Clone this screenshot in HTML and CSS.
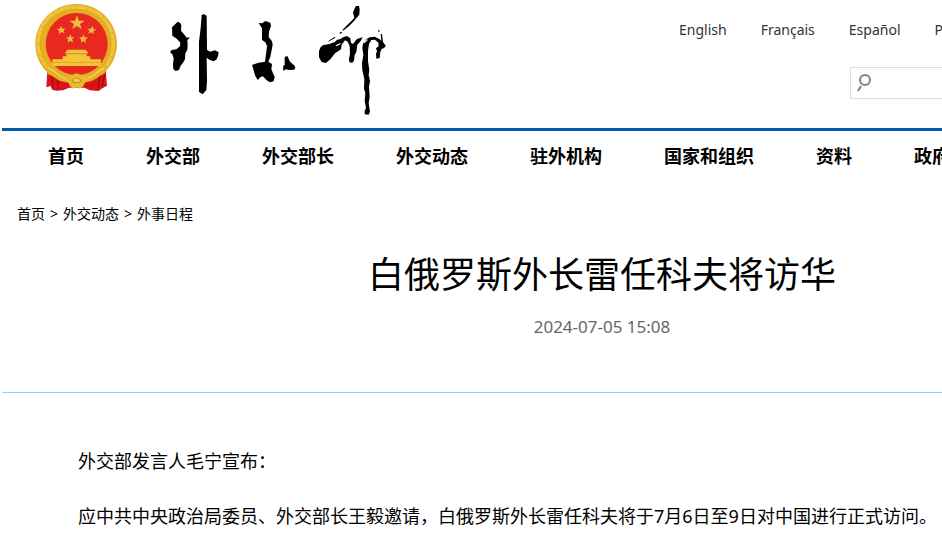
FILE: index.html
```html
<!DOCTYPE html>
<html lang="zh-CN">
    <head>
        <meta charset="UTF-8">
        <title>白俄罗斯外长雷任科夫将访华</title>
        <link rel="stylesheet" href="styles.css">
    </head>
    <body>
        <div class="page">
            <header class="header">
                <a class="logo" href="#" aria-label="外交部">
                    <svg class="emblem" viewBox="0 0 312 300" aria-hidden="true">
                        <path fill="#d9141a" d="M65 198 61 262 74 258 78 269 91 272 111 271 128 263 177 263 191 271 218 273 229 265 243 257 238 197Z"/>
                        <path fill="#a90f12" d="M73 215l5 48 5 1-4-46zM91 228l3 40 5 1-2-38zM219 225l-5 44 5-2 6-44zM234 213l-7 45 5-2 7-40z"/>
                        <path fill="#e3ae22" d="M151 12C84 12 28 65 28 132c0 31 11 57 28 77 28 27 61 33 94 32 37 1 69-10 95-34 18-21 28-48 28-76C273 65 218 12 151 12Z"/>
                        <path fill="none" stroke="#efc440" stroke-width="10" stroke-dasharray="31 3 17 2" d="M70 207C15 155 31 68 89 37c62-33 134-11 161 43 22 45 13 94-19 129"/>
                        <path fill="none" stroke="#d9a11c" stroke-width="2" stroke-dasharray="9 7 4 5" d="M63 198C28 145 39 78 90 46c55-34 124-14 151 34 20 39 13 83-9 115"/>
                        <circle cx="152" cy="132" r="93" fill="#e92820"/>
                        <path fill="#f2c53a" d="M79 178h146v20H79zM110 169h83v10h-83zM121 161h61v9h-61zM116 160l7-9h57l8 9zM124 149h56v3h-56z"/>
                        <path fill="#dc9e23" d="M119 160h66v3h-66zM79 187h146v2H79z"/>
                        <path fill="#e3b02a" d="M64 190c24 8 31 33 60 40l53-1c30-7 40-29 62-39l-2 30c-18 7-25 19-43 24-31 7-57 8-90-1-16-5-24-17-39-20Z"/>
                        <path fill="none" stroke="#f6d35a" stroke-width="4" d="M66 204c22 7 32 28 54 32M236 204c-21 7-31 26-54 32"/>
                        <path fill="#d9141a" d="M106 246c14 5 24 4 34 4l-14 14-17 6-14-12ZM198 246c-14 5-24 4-34 4l14 14 17 6 14-12Z"/>
                        <path fill="#e9b930" d="m152 220 14 5 16 5 10 12-14 4-6 12-10 8-10-4-10 4-10-8-6-12-14-4 10-12 16-5Z"/>
                        <path fill="#c98c16" d="m136 240 16-8 16 8-6 9h-20Z"/>
                        <path fill="#f4cc43" d="m140 240 12-5 12 5-5 6h-14Z"/>
                        <g fill="#eebd3d">
                            <path d="m153 46 6 16h17l-14 10 5 15-14-9-14 9 5-15-14-10h17Z"/>
                            <path d="m105 77 4 9 10-1-7 7 4 8-9-4-8 6 1-10-8-5 10-1Z"/>
                            <path d="m201 77 1 10 9 2-9 5 1 9-7-6-10 4 5-8-7-7h10Z"/>
                            <path d="m133 103 3 9h10l-8 6 4 9-9-5-8 6 2-10-8-5 10-1Z"/>
                            <path d="m173 103 3 9 10 1-8 6 2 9-8-5-8 5 2-9-7-7h10Z"/>
                        </g>
                    </svg>
                    <!-- brush lettering -->
                    <svg class="lettering" viewBox="0 0 720 360" aria-hidden="true">
                        <path d="M53 65 61 69 64 76 63 92 77 109 80 113 89 112 86 117 82 120 83 136 82 150 76 160 75 178 70 187 62 197 57 210 47 213 40 208 39 193 41 175 37 163 30 157 35 150 49 148 60 139 61 128 51 117 37 107 36 82Z"/>
                        <path d="M125 45 131 42 140 47 141 150 150 155 165 151 176 157 174 169 169 179 160 184 148 179 140 173 141 243 139 270 128 283 117 276 117 125 122 85Z"/>
                        <path d="M296 69 306 70 316 63 331 68 333 77 327 95 326 111 336 124 338 134 335 150 331 170 325 185 336 192 334 208 344 231 341 244 330 247 320 241 309 229 302 231 293 240 286 228 276 195 296 188 315 185 318 163 321 138 316 127 306 120 306 85Z"/>
                        <path d="M374 171 382 168 390 185 404 197 406 205 402 209 388 210 378 208 369 212 370 197 374 195Z"/>
                        <path d="M583 27 588 18 597 18 599 28 598 44 590 53 583 62 565 80 549 92 547 90 565 72 583 54 579 38ZM538 99 544 95 547 97 541 102ZM502 127 510 119 525 110 526 113Z"/>
                        <path d="M477 153 482 141 490 135 505 133 523 127 532 119 542 117 549 112 561 108 571 115 573 128 579 132 591 117 608 112 602 123 592 134 589 156 584 165 582 182 576 189 568 186 567 178 570 160 569 138 563 125 555 121 545 134 543 148 525 160 511 178 498 189 485 186 477 172Z"/>
                        <path d="M607 144 609 131 618 118 630 112 645 110 659 118 671 130 677 138 672 144 665 146 661 156 659 174 649 176 648 162 651 153 648 145 656 138 655 128 645 119 634 120 627 132 624 153 624 184 628 210 626 225 630 243 627 260 629 290 626 310 630 335 626 344 614 343 614 332 618 324 614 303 616 280 612 266 613 238 607 210 606 190 610 165Z"/>
                        <path d="M654 90 659 92 658 96 654 94ZM662 101 666 103 669 127 677 137 670 145 660 144 664 125Z"/>
                        <path fill="#fff" d="M611 126 621 117 623 120 614 130ZM527 136 541 129 542 132 530 139Z"/>
                    </svg>
                </a>
                <div class="tools">
                    <nav class="languages">
                        <a href="#">English</a>
                        <a href="#">Français</a>
                        <a href="#">Español</a>
                        <a href="#">Русский</a>
                    </nav>
                    <form class="search">
                        <svg viewBox="0 0 14 18" aria-hidden="true">
                            <circle cx="8" cy="6" r="5"/>
                            <path d="M4 12 1 17"/>
                        </svg>
                        <input type="text" aria-label="搜索">
                    </form>
                </div>
            </header>

            <nav class="menu">
                <a href="#">首页</a>
                <a href="#">外交部</a>
                <a href="#">外交部长</a>
                <a href="#">外交动态</a>
                <a href="#">驻外机构</a>
                <a href="#">国家和组织</a>
                <a href="#">资料</a>
                <a href="#">政府信息公开</a>
            </nav>

            <nav class="breadcrumb">
                <a href="#">首页</a>
                <span>&gt;</span>
                <a href="#">外交动态</a>
                <span>&gt;</span>
                <a href="#">外事日程</a>
            </nav>

            <main class="article">
                <div class="article-head">
                    <h1>白俄罗斯外长雷任科夫将访华</h1>
                    <time datetime="2024-07-05T15:08">2024-07-05 15:08</time>
                </div>
                <div class="article-body">
                    <p>外交部发言人毛宁宣布：</p>
                    <p>应中共中央政治局委员、外交部长王毅邀请，白俄罗斯外长雷任科夫将于7月6日至9日对中国进行正式访问。</p>
                </div>
            </main>
        </div>
    </body>
</html>
```
FILE: styles.css
```css
body {
    margin: 0;
    overflow-x: hidden;
    background: #fff;
    color: #000;
    font-family: "Noto Sans", "Noto Sans CJK SC", sans-serif;
    font-size: 18px;
}
a {
    color: inherit;
    text-decoration: none;
}

/* the site never gets narrower than its 1200px column */
.page {
    min-width: 1200px;
    margin-left: 2px;
}

.header {
    display: flex;
    justify-content: space-between;
    height: 128px;
    border-bottom: 3px solid #005ba9;
}
.logo {
    display: flex;
    align-items: flex-start;
    margin-left: 24px;
}
.emblem {
    width: 104px;
    height: 100px;
}
.lettering {
    width: 240px;
    height: 120px;
    margin-left: 30px;
}
.tools {
    display: flex;
    flex-direction: column;
    width: 523px;
}
.languages {
    display: flex;
    gap: 34px;
    padding-top: 20px;
    color: #333;
    font-size: 14px;
    line-height: 20px;
}
.search {
    display: flex;
    align-items: center;
    align-self: flex-end;
    box-sizing: border-box;
    width: 352px;
    height: 32px;
    margin-top: 27px;
    padding: 0 6px;
    border: 1px solid #ddd;
}
.search svg {
    width: 14px;
    height: 18px;
    fill: none;
    stroke: #808080;
    stroke-width: 2;
}
.search input {
    flex: 1;
    margin-left: 8px;
    border: 0;
    outline: 0;
    background: none;
    font: inherit;
    font-size: 14px;
}

.menu {
    display: flex;
    gap: 62px;
    padding: 0 46px;
    font-weight: bold;
    line-height: 50px;
    white-space: nowrap;
}

.breadcrumb {
    display: flex;
    gap: 5px;
    margin-top: 23px;
    padding-left: 15px;
    font-size: 14px;
    line-height: 20px;
}

.article-head {
    padding: 24px 0 53px;
    border-bottom: 1px solid #9cf;
    text-align: center;
}
.article-head h1 {
    margin: 0;
    font-size: 36px;
    font-weight: normal;
    line-height: 54px;
}
.article-head time {
    display: block;
    margin-top: 13px;
    color: #666;
    font-size: 17px;
    line-height: 24px;
}
.article-body {
    padding: 50px 40px 0;
    line-height: 37px;
}
.article-body p {
    margin: 0;
    text-indent: 2em;
}
.article-body p + p {
    margin-top: 18px;
}
```
